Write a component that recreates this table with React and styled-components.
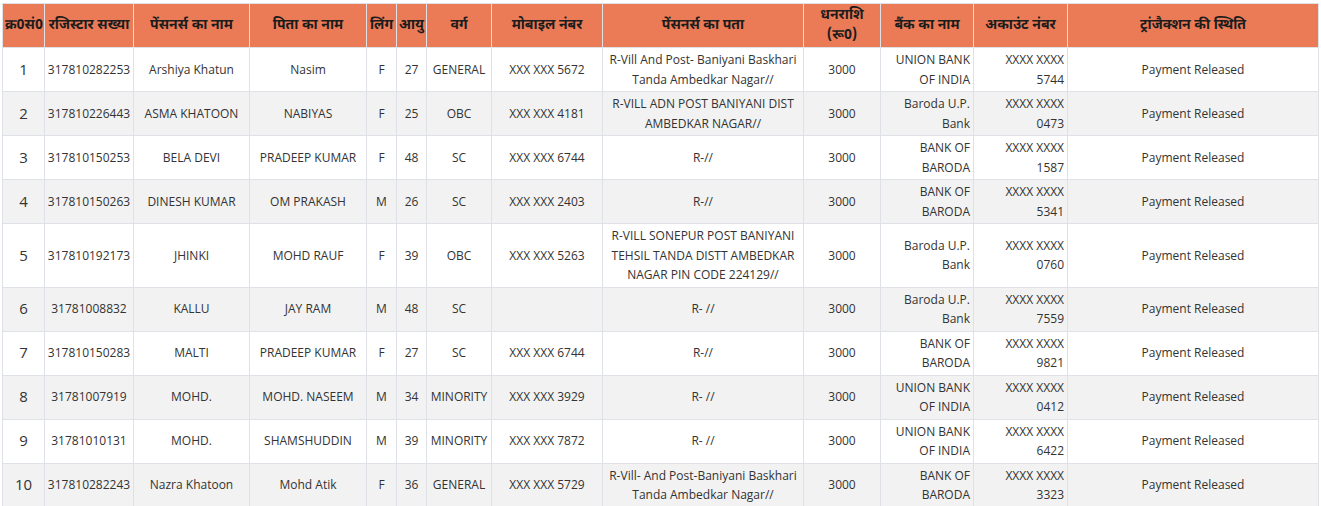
import React from "react";
import styled, { createGlobalStyle } from "styled-components";

const GlobalStyle = createGlobalStyle`
  html, body { margin: 0; padding: 0; background: #ffffff; }
  body { font-family: "Open Sans", "Noto Sans Devanagari", "Lohit Devanagari", "FreeSans", sans-serif; color: #333333; }
`;

const Wrapper = styled.div`
  padding: 3px 0 0 2px;
  overflow: hidden;
`;

const Table = styled.table`
  width: 1316px;
  table-layout: fixed;
  border-collapse: collapse;
  border: 1px solid #dee2e6;
  font-size: 12px;
  line-height: 19.5px;
`;

const HeadCell = styled.th`
  background: #eb7b57;
  color: #1c1c1c;
  font-family: "Noto Sans Devanagari", "Lohit Devanagari", "FreeSans", "Open Sans", sans-serif;
  font-weight: 700;
  font-size: 14px;
  line-height: 19.5px;
  text-align: center;
  vertical-align: middle;
  padding: 2px 2px;
  border: 1px solid #dee2e6;
  white-space: ${(p) => (p.$nowrap ? "nowrap" : "normal")};
`;

const Row = styled.tr`
  background: ${(p) => (p.$striped ? "#f2f2f2" : "#ffffff")};
`;

const Cell = styled.td`
  padding: ${(p) => (p.$tight ? "2px 0" : "2px 3px")};
  border: 1px solid #dee2e6;
  text-align: ${(p) => p.$align || "center"};
  vertical-align: middle;
  color: #333333;
  white-space: ${(p) => (p.$tight ? "nowrap" : "normal")};
  overflow-wrap: break-word;
`;

const IndexCell = styled(Cell)`
  font-size: 15px;
`;

const columns = [
  { label: "क्र0सं0", width: 42, nowrap: true },
  { label: "रजिस्टार सख्या", width: 89, nowrap: true },
  { label: "पेंसनर्स का नाम", width: 116 },
  { label: "पिता का नाम", width: 117 },
  { label: "लिंग", width: 30, nowrap: true },
  { label: "आयु", width: 30, nowrap: true },
  { label: "वर्ग", width: 65 },
  { label: "मोबाइल नंबर", width: 111 },
  { label: "पेंसनर्स का पता", width: 201 },
  { label: "धनराशि (रू0)", width: 77 },
  { label: "बैंक का नाम", width: 93 },
  { label: "अकाउंट नंबर", width: 94 },
  { label: "ट्रांजैक्शन की स्थिति", width: 251 },
];

const rows = [
  ["317810282253", "Arshiya Khatun", "Nasim", "F", "27", "GENERAL", "XXX XXX 5672", "R-Vill And Post- Baniyani Baskhari Tanda Ambedkar Nagar//", "UNION BANK OF INDIA", "XXXX XXXX 5744"],
  ["317810226443", "ASMA KHATOON", "NABIYAS", "F", "25", "OBC", "XXX XXX 4181", "R-VILL ADN POST BANIYANI DIST AMBEDKAR NAGAR//", "Baroda U.P. Bank", "XXXX XXXX 0473"],
  ["317810150253", "BELA DEVI", "PRADEEP KUMAR", "F", "48", "SC", "XXX XXX 6744", "R-//", "BANK OF BARODA", "XXXX XXXX 1587"],
  ["317810150263", "DINESH KUMAR", "OM PRAKASH", "M", "26", "SC", "XXX XXX 2403", "R-//", "BANK OF BARODA", "XXXX XXXX 5341"],
  ["317810192173", "JHINKI", "MOHD RAUF", "F", "39", "OBC", "XXX XXX 5263", "R-VILL SONEPUR POST BANIYANI TEHSIL TANDA DISTT AMBEDKAR NAGAR PIN CODE 224129//", "Baroda U.P. Bank", "XXXX XXXX 0760"],
  ["31781008832", "KALLU", "JAY RAM", "M", "48", "SC", "", "R- //", "Baroda U.P. Bank", "XXXX XXXX 7559"],
  ["317810150283", "MALTI", "PRADEEP KUMAR", "F", "27", "SC", "XXX XXX 6744", "R-//", "BANK OF BARODA", "XXXX XXXX 9821"],
  ["31781007919", "MOHD.", "MOHD. NASEEM", "M", "34", "MINORITY", "XXX XXX 3929", "R- //", "UNION BANK OF INDIA", "XXXX XXXX 0412"],
  ["31781010131", "MOHD.", "SHAMSHUDDIN", "M", "39", "MINORITY", "XXX XXX 7872", "R- //", "UNION BANK OF INDIA", "XXXX XXXX 6422"],
  ["317810282243", "Nazra Khatoon", "Mohd Atik", "F", "36", "GENERAL", "XXX XXX 5729", "R-Vill- And Post-Baniyani Baskhari Tanda Ambedkar Nagar//", "BANK OF BARODA", "XXXX XXXX 3323"],
];

export default function App() {
  return (
    <>
      <GlobalStyle />
      <Wrapper>
        <Table>
          <colgroup>
            {columns.map((c, i) => (
              <col key={i} style={{ width: c.width }} />
            ))}
          </colgroup>
          <thead>
            <tr>
              {columns.map((c, i) => (
                <HeadCell key={i} $nowrap={c.nowrap}>
                  {c.label}
                </HeadCell>
              ))}
            </tr>
          </thead>
          <tbody>
            {rows.map((r, i) => (
              <Row key={i} $striped={i % 2 === 1}>
                <IndexCell>{i + 1}</IndexCell>
                <Cell $tight>{r[0]}</Cell>
                <Cell>{r[1]}</Cell>
                <Cell>{r[2]}</Cell>
                <Cell>{r[3]}</Cell>
                <Cell>{r[4]}</Cell>
                <Cell>{r[5]}</Cell>
                <Cell>{r[6]}</Cell>
                <Cell>{r[7]}</Cell>
                <Cell>3000</Cell>
                <Cell $align="right">{r[8]}</Cell>
                <Cell $align="right">{r[9]}</Cell>
                <Cell>Payment Released</Cell>
              </Row>
            ))}
          </tbody>
        </Table>
      </Wrapper>
    </>
  );
}
